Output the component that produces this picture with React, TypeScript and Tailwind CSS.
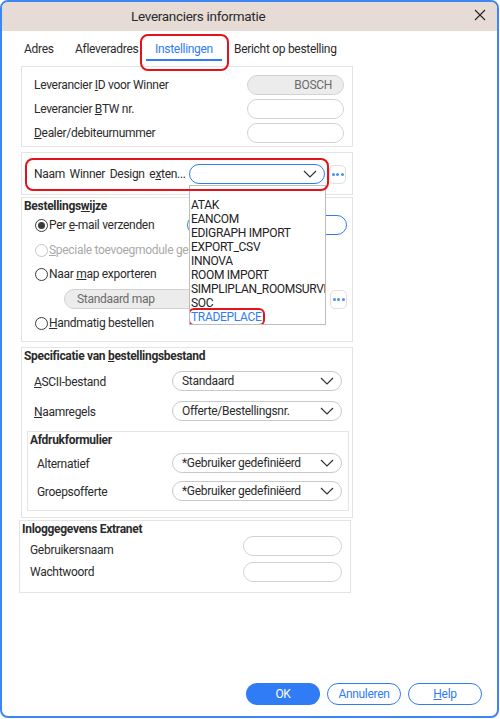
import type { ReactNode } from "react";

const font = { fontFamily: "Roboto, 'Liberation Sans', sans-serif" };

function Chevron() {
    return (
        <svg width="14" height="8" viewBox="0 0 14 8" className="shrink-0">
            <polyline points="1,1 7,7 13,1" fill="none" stroke="#333" strokeWidth="1.2" />
        </svg>
    );
}

function Select({ value, w, blue }: { value?: string; w: string; blue?: boolean }) {
    return (
        <div
            className={`${w} h-[20px] rounded-full border ${blue ? "border-[#2f7cf6]" : "border-[#c9c9c9]"} flex items-center justify-between pl-[9px] pr-[7px] bg-white`}
        >
            <span className="text-[12px] text-[#2b2b2b] leading-none whitespace-nowrap">{value}</span>
            <Chevron />
        </div>
    );
}

function Input({ w, value, grey }: { w: string; value?: string; grey?: boolean }) {
    return (
        <div
            className={`${w} h-[20px] rounded-full border border-[#d2d2d2] ${grey ? "bg-[#ececec]" : "bg-white"} flex items-center justify-end pr-[11px] text-[12px] text-[#6b6b6b]`}
        >
            {value}
        </div>
    );
}

function DotsButton() {
    return (
        <div className="w-[17px] h-[19px] rounded-[5px] border border-[#eadcd2] bg-white flex items-center justify-center gap-[1.5px] shrink-0">
            <span className="w-[3px] h-[3px] rounded-full bg-[#4d8ff5]" />
            <span className="w-[3px] h-[3px] rounded-full bg-[#4d8ff5]" />
            <span className="w-[3px] h-[3px] rounded-full bg-[#4d8ff5]" />
        </div>
    );
}

function Radio({ checked, disabled, children }: { checked?: boolean; disabled?: boolean; children: ReactNode }) {
    return (
        <div className={`flex items-center gap-[1px] ${disabled ? "text-[#a9a9a9]" : "text-[#2b2b2b]"}`}>
            <span
                className={`w-[13px] h-[13px] rounded-full border ${disabled ? "border-[#c4c4c4]" : "border-[#3a3a3a]"} flex items-center justify-center shrink-0`}
            >
                {checked && <span className="w-[7px] h-[7px] rounded-full bg-[#3a3a3a]" />}
            </span>
            <span className="whitespace-nowrap">{children}</span>
        </div>
    );
}

const list = ["ATAK", "EANCOM", "EDIGRAPH IMPORT", "EXPORT_CSV", "INNOVA", "ROOM IMPORT", "SIMPLIPLAN_ROOMSURVEY", "SOC"];

export default function App() {
    return (
        <div className="w-[500px] h-[719px] bg-white" style={font}>
            <div className="w-[499px] h-[718px] border-2 border-[#3d86f3] rounded-[8px] overflow-hidden flex flex-col text-[12px] tracking-[-0.3px] text-[#2b2b2b]">
                {/* titel */}
                <div className="h-[29px] bg-[#e6dcd5] flex items-center relative shrink-0">
                    <div className="pl-[129px] text-[13.5px] text-[#2b2b2b]">Leveranciers informatie</div>
                    <svg width="12" height="12" viewBox="0 0 12 12" className="absolute left-[472px] top-[7px]">
                        <path d="M1 1L11 11M11 1L1 11" stroke="#222" strokeWidth="1.1" />
                    </svg>
                </div>

                {/* tabs */}
                <div className="flex pl-[22px] mb-[5px] shrink-0">
                    <div className="w-[51px] pt-[10px] leading-[16px] pb-[4px]">Adres</div>
                    <div className="w-[71px] pt-[10px] leading-[16px] pb-[4px] whitespace-nowrap">Afleveradres</div>
                    <div className="relative w-[76px] pt-[10px] leading-[16px] pb-[2px] border-b-2 border-[#2f7cf6] text-center text-[#2f7cf6]">
                        Instellingen
                        <div className="absolute left-[-6px] top-[3px] w-[89px] h-[37px] border-2 border-[#e3121b] rounded-[8px]" />
                    </div>
                    <div className="pl-[12px] pt-[10px] leading-[16px]">Bericht op bestelling</div>
                </div>

                {/* winner id */}
                <div className="ml-[19px] w-[332px] border border-[#e4e4e4] pt-[8px] pb-[3px] pl-[12px] pr-[8px] flex flex-col gap-[4px] shrink-0">
                    <div className="h-[20px] flex items-center justify-between">
                        <span>Leverancier <u>I</u>D voor Winner</span>
                        <Input w="w-[97px]" value="BOSCH" grey />
                    </div>
                    <div className="h-[20px] flex items-center justify-between">
                        <span>Leverancier <u>B</u>TW nr.</span>
                        <Input w="w-[97px]" />
                    </div>
                    <div className="h-[20px] flex items-center justify-between">
                        <span><u>D</u>ealer/debiteurnummer</span>
                        <Input w="w-[97px]" />
                    </div>
                </div>

                {/* extensie */}
                <div className="relative ml-[19px] mt-[5px] w-[332px] border border-[#e4e4e4] pt-[11px] pb-[10px] pl-[12px] pr-[6px] shrink-0 z-10">
                    <div className="h-[20px] flex items-center">
                        <span className="w-[155px] whitespace-nowrap [word-spacing:2px]">Naam Winner Design e<u>x</u>ten...</span>
                        <div className="relative">
                            <Select w="w-[136px]" blue />
                            {/* lijst */}
                            <div className="absolute left-0 top-[21px] w-[137px] h-[140px] bg-white border border-[#bdbdbd] pt-[12px] overflow-hidden">
                                {list.map((item) => (
                                    <div key={item} className="h-[14px] leading-[14px] pl-[1px] whitespace-nowrap text-[#222]">
                                        {item}
                                    </div>
                                ))}
                                <div className="h-[14px] leading-[14px] pl-[1px] text-[#2f7cf6]">
                                    <span className="relative">
                                        TRADEPLACE
                                        <span className="absolute left-[-3px] top-[-2px] w-[77px] h-[18px] border-2 border-[#e3121b] rounded-[6px]" />
                                    </span>
                                </div>
                            </div>
                        </div>
                        <div className="ml-[4px]">
                            <DotsButton />
                        </div>
                    </div>
                    <div className="absolute left-[3px] top-[5px] w-[304px] h-[33px] border-2 border-[#e3121b] rounded-[8px] pointer-events-none" />
                </div>

                {/* bestellingswijze */}
                <div className="ml-[19px] mt-[2px] w-[332px] border border-[#e4e4e4] pl-[2px] pr-[5px] pb-[8px] shrink-0">
                    <div className="h-[16px] leading-[16px] font-bold">
                        Bestellings<u>wij</u>ze
                    </div>
                    <div className="mt-[1px] h-[20px] flex items-center pl-[11px]">
                        <Radio checked>
                            Per <u>e</u>-mail verzenden
                        </Radio>
                        <div className="ml-auto w-[160px] h-[20px] rounded-full border border-[#2f7cf6]" />
                    </div>
                    <div className="mt-[5px] h-[20px] flex items-center pl-[11px] overflow-hidden">
                        <Radio disabled>
                            <u>S</u>peciale toevoegmodule gebruiken
                        </Radio>
                    </div>
                    <div className="mt-[4px] h-[20px] flex items-center pl-[11px]">
                        <Radio>
                            Naar <u>m</u>ap exporteren
                        </Radio>
                    </div>
                    <div className="mt-[5px] h-[20px] flex items-center pl-[40px]">
                        <div className="w-[262px] h-[20px] rounded-full border border-[#d2d2d2] bg-[#ececec] flex items-center pl-[12px] text-[#6b6b6b]">
                            Standaard map
                        </div>
                        <div className="ml-auto">
                            <DotsButton />
                        </div>
                    </div>
                    <div className="mt-[4px] h-[20px] flex items-center pl-[11px]">
                        <Radio>
                            <u>H</u>andmatig bestellen
                        </Radio>
                    </div>
                </div>

                {/* specificatie */}
                <div className="ml-[19px] mt-[5px] w-[332px] border border-[#e4e4e4] pb-[6px] shrink-0">
                    <div className="h-[16px] leading-[16px] font-bold pl-[2px]">
                        Specificatie van <u>b</u>estellingsbestand
                    </div>
                    <div className="mt-[7px] h-[20px] flex items-center justify-between pl-[12px] pr-[10px]">
                        <span className="mt-[2px]"><u>A</u>SCII-bestand</span>
                        <Select w="w-[170px]" value="Standaard" />
                    </div>
                    <div className="mt-[10px] h-[20px] flex items-center justify-between pl-[12px] pr-[10px]">
                        <span className="mt-[2px]"><u>N</u>aamregels</span>
                        <Select w="w-[170px]" value="Offerte/Bestellingsnr." />
                    </div>
                    <div className="ml-[5px] mt-[10px] w-[322px] border border-[#e4e4e4] pb-[9px]">
                        <div className="h-[16px] leading-[16px] font-bold pl-[2px]">Afdrukformulier</div>
                        <div className="mt-[5px] h-[20px] flex items-center justify-between pl-[9px] pr-[6px]">
                            <span className="mt-[2px]">Alternatief</span>
                            <Select w="w-[170px]" value="*Gebruiker gedefiniëerd" />
                        </div>
                        <div className="mt-[8px] h-[20px] flex items-center justify-between pl-[9px] pr-[6px]">
                            <span className="mt-[2px]">Groepsofferte</span>
                            <Select w="w-[170px]" value="*Gebruiker gedefiniëerd" />
                        </div>
                    </div>
                </div>

                {/* extranet */}
                <div className="ml-[17px] mt-[2px] w-[332px] border border-[#e4e4e4] pb-[10px] shrink-0">
                    <div className="h-[14px] leading-[14px] mt-[1px] font-bold pl-[2px]">Inloggegevens Extranet</div>
                    <div className="h-[20px] flex items-center justify-between pl-[10px] pr-[8px]">
                        <span className="mt-[8px]">Gebruikersnaam</span>
                        <Input w="w-[99px]" />
                    </div>
                    <div className="mt-[6px] h-[20px] flex items-center justify-between pl-[10px] pr-[8px]">
                        <span>Wachtwoord</span>
                        <Input w="w-[99px]" />
                    </div>
                </div>

                {/* knoppen */}
                <div className="mt-auto flex justify-end gap-[7px] pr-[15px] pb-[11px]">
                    <div className="w-[74px] h-[22px] rounded-full bg-[#2f7cf6] text-white flex items-center justify-center">OK</div>
                    <div className="w-[74px] h-[22px] rounded-full border border-[#2f7cf6] text-[#2f7cf6] flex items-center justify-center">
                        Annuleren
                    </div>
                    <div className="w-[74px] h-[22px] rounded-full border border-[#2f7cf6] text-[#2f7cf6] flex items-center justify-center">
                        <span><u>H</u>elp</span>
                    </div>
                </div>
            </div>
        </div>
    );
}
